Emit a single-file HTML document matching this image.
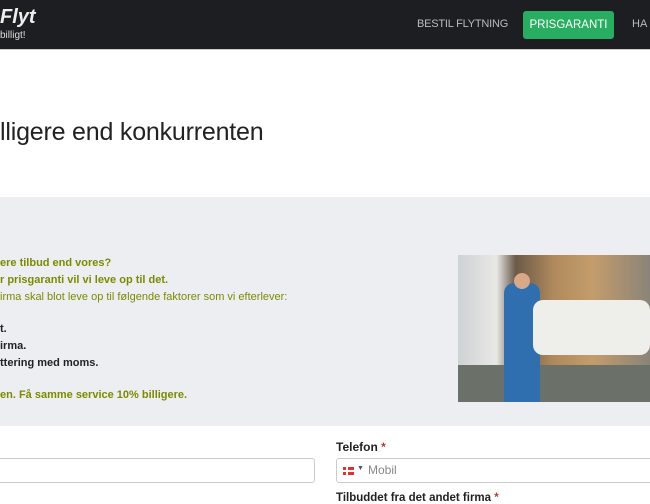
<!DOCTYPE html>
<html><head><meta charset="utf-8"><style>
*{margin:0;padding:0;box-sizing:border-box}
body{width:650px;height:500px;overflow:hidden;background:#fff;font-family:"Liberation Sans",sans-serif;position:relative}
.hdr{position:absolute;left:0;top:0;width:650px;height:50px;background:#1c1e22;border-bottom:1px solid #ccc}
.abs{position:absolute;white-space:nowrap}
.gray{position:absolute;left:0;top:197px;width:650px;height:229px;background:#eceef2}
.t{position:absolute;left:0;font-size:11px;font-weight:bold;color:#7d8a00;white-space:nowrap}
.k{color:#222}
.n{font-weight:normal;font-size:11px}
</style></head><body>
<div class="hdr">
<div class="abs" style="left:0;top:6px;color:#eee;font-size:20px;font-weight:bold;font-style:italic">Flyt</div>
<div class="abs" style="left:0;top:30px;color:#ddd;font-size:10px">billigt!</div>
<div class="abs" style="left:417px;top:18px;color:#bbb;font-size:11px;letter-spacing:-0.2px">BESTIL FLYTNING</div>
<div class="abs" style="left:523px;top:11px;width:91px;height:28px;background:#27ae60;border-radius:3px;color:#fff;font-size:11.5px;text-align:center;line-height:28px">PRISGARANTI</div>
<div class="abs" style="left:632px;top:18px;color:#bbb;font-size:11px">HA</div>
</div>
<div class="abs" style="left:0;top:118px;font-size:25px;color:#222;letter-spacing:-0.2px">lligere end konkurrenten</div>
<div class="gray"></div>
<div class="t" style="top:257px">ere tilbud end vores?</div>
<div class="t" style="top:274px">r prisgaranti vil vi leve op til det.</div>
<div class="t n" style="top:291px">irma skal blot leve op til følgende faktorer som vi efterlever:</div>
<div class="t k" style="top:323px">t.</div>
<div class="t k" style="top:340px">irma.</div>
<div class="t k" style="top:357px">ttering med moms.</div>
<div class="t" style="top:389px">en. Få samme service 10% billigere.</div>
<div class="abs" style="left:458px;top:255px;width:192px;height:147px;background:linear-gradient(90deg,#cfd2d4 0%,#e8e8e6 20%,#6a5a48 30%,#b08a5c 50%,#c49c6c 70%,#8a8478 100%)">
<div class="abs" style="left:0;top:110px;width:192px;height:37px;background:#6b7068"></div>
<div class="abs" style="left:46px;top:28px;width:36px;height:119px;background:#2f6fb0;border-radius:10px 10px 0 0"></div>
<div class="abs" style="left:56px;top:18px;width:16px;height:16px;background:#d8a888;border-radius:50%"></div>
<div class="abs" style="left:75px;top:45px;width:117px;height:55px;background:#eeeeea;border-radius:10px"></div>
</div>
<div class="abs" style="left:336px;top:440px;font-size:12px;font-weight:bold;color:#222">Telefon <span style="color:#c0392b">*</span></div>
<div class="abs" style="left:-5px;top:458px;width:320px;height:25px;border:1px solid #ccc;border-radius:3px"></div>
<div class="abs" style="left:336px;top:458px;width:320px;height:25px;border:1px solid #ccc;border-radius:3px"></div>
<div class="abs" style="left:343px;top:467px;width:11px;height:8px;background:#e03030"><div style="position:absolute;left:3px;top:0;width:2px;height:8px;background:#fff"></div><div style="position:absolute;left:0;top:3px;width:11px;height:2px;background:#fff"></div></div>
<div class="abs" style="left:357px;top:465px;font-size:7px;color:#555">▼</div>
<div class="abs" style="left:368px;top:463px;font-size:12px;color:#888">Mobil</div>
<div class="abs" style="left:336px;top:492px;font-size:11.5px;font-weight:bold;color:#222">Tilbuddet fra det andet firma <span style="color:#c0392b">*</span></div>
</body></html>
